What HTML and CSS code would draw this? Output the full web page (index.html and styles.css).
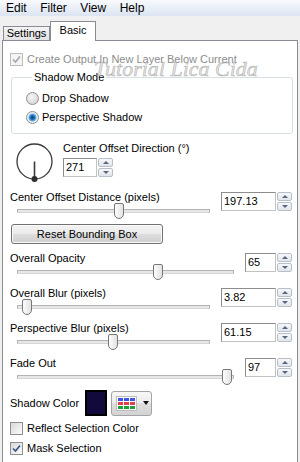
FILE: index.html
```html
<!DOCTYPE html>
<html lang="en">
<head>
  <meta charset="UTF-8">
  <title>Perspective Shadow</title>
  <link rel="stylesheet" href="styles.css">
</head>
<body>
<div class="window">

  <!-- menu -->
  <div class="menubar">
    <span>Edit</span><span>Filter</span><span>View</span><span>Help</span>
  </div>

  <!-- tabs -->
  <div class="tabs">
    <span class="tab">Settings</span>
    <span class="tab active">Basic</span>
  </div>

  <div class="panel">
    <div class="watermark">Tutorial Lica Cida</div>

    <label class="check disabled">
      <span class="box"><svg width="11" height="11" viewBox="0 0 11 11"><polyline points="2,5.5 4.5,8 9,2.5" /></svg></span>
      Create Output In New Layer Below Current
    </label>

    <fieldset class="group">
      <legend>Shadow Mode</legend>
      <label class="radio"><span class="dot"></span>Drop Shadow</label>
      <label class="radio"><span class="dot on"></span>Perspective Shadow</label>
    </fieldset>

    <!-- direction dial -->
    <div class="dir">
      <svg class="dial" width="40" height="41" viewBox="0 0 40 41">
        <circle cx="19.5" cy="19.5" r="17.5" fill="#fff" stroke="#3a3a3a" stroke-width="1.3" />
        <line x1="19.5" y1="19.5" x2="19.5" y2="37" stroke="#3a3a3a" stroke-width="1.6" />
        <circle cx="19.5" cy="37" r="3" fill="#2e2e2e" />
      </svg>
      <div class="dir-body">
        <div class="lbl">Center Offset Direction (°)</div>
        <div class="spin dirw"><span class="field">271</span><span class="arrows"><span class="up"></span><span class="down"></span></span></div>
      </div>
    </div>

    <div class="param">
      <div class="lbl">Center Offset Distance (pixels)</div>
      <div class="slider"><span class="thumb" style="left: 52.8%"></span></div>
      <div class="spin wide"><span class="field">197.13</span><span class="arrows"><span class="up"></span><span class="down"></span></span></div>
    </div>

    <button class="btn">Reset Bounding Box</button>

    <div class="param">
      <div class="lbl">Overall Opacity</div>
      <div class="slider"><span class="thumb" style="left: 65%"></span></div>
      <div class="spin narrow"><span class="field">65</span><span class="arrows"><span class="up"></span><span class="down"></span></span></div>
    </div>

    <div class="param">
      <div class="lbl">Overall Blur (pixels)</div>
      <div class="slider"><span class="thumb" style="left: 5.2%"></span></div>
      <div class="spin wide"><span class="field">3.82</span><span class="arrows"><span class="up"></span><span class="down"></span></span></div>
    </div>

    <div class="param">
      <div class="lbl">Perspective Blur (pixels)</div>
      <div class="slider"><span class="thumb" style="left: 49.7%"></span></div>
      <div class="spin wide"><span class="field">61.15</span><span class="arrows"><span class="up"></span><span class="down"></span></span></div>
    </div>

    <div class="param">
      <div class="lbl">Fade Out</div>
      <div class="slider"><span class="thumb" style="left: 97%"></span></div>
      <div class="spin narrow"><span class="field">97</span><span class="arrows"><span class="up"></span><span class="down"></span></span></div>
    </div>

    <div class="color-row">
      <span class="color-lbl">Shadow Color</span>
      <span class="swatch"></span>
      <span class="picker">
        <span class="palette">
          <i class="b"></i><i class="b"></i><i class="b"></i>
          <i class="r"></i><i class="r"></i><i class="r"></i>
          <i class="g"></i><i class="g"></i><i class="g"></i>
        </span>
        <span class="caret"></span>
      </span>
    </div>

    <label class="check reflect">
      <span class="box"></span>
      Reflect Selection Color
    </label>
    <label class="check mask">
      <span class="box"><svg width="11" height="11" viewBox="0 0 11 11"><polyline points="2,5.5 4.5,8 9,2.5" /></svg></span>
      Mask Selection
    </label>
  </div>

</div>
</body>
</html>
```

FILE: styles.css
```css
body {
  margin: 0;
  font-family: "Liberation Sans", Arial, sans-serif;
  font-size: 11px;
  color: #000;
  background: #f0f0f0;
}
.window {
  width: 300px;
  height: 462px;
  overflow: hidden;
}
.menubar {
  height: 16px;
  line-height: 17px;
  font-size: 12px;
  padding-left: 6px;
  display: flex;
  gap: 13.5px;
  background: linear-gradient(#f8fafd, #dbe4f1);
}
.tabs {
  height: 24px;
  display: flex;
  align-items: flex-end;
  padding-left: 3px;
}
.tab {
  width: 45px;
  height: 13px;
  line-height: 13px;
  text-align: center;
  border: 1px solid #898c95;
  border-bottom: 0;
  background: linear-gradient(#f4f4f4, #e4e4e4);
}
.tab.active {
  width: 44px;
  height: 16px;
  line-height: 16px;
  padding-bottom: 3px;
  margin-bottom: -1px;
  background: #fff;
  position: relative;
  z-index: 1;
}
.panel {
  position: relative;
  height: 421px;
  margin: 0 2px;
  padding-top: 11px;
  background: #fff;
  border: 1px solid #898c95;
  border-bottom: 0;
}
.watermark {
  position: absolute;
  left: 91px;
  top: 17px;
  font-family: "Liberation Serif", serif;
  font-style: italic;
  font-size: 22px;
  line-height: 22px;
  color: rgba(205, 205, 205, 0.55);
  -webkit-text-stroke: 0.6px rgba(130, 130, 130, 0.55);
  pointer-events: none;
}

/* checkbox & radio */
.check {
  display: flex;
  align-items: center;
  gap: 4px;
  height: 14px;
  line-height: 14px;
  margin-left: 7px;
}
.check .box {
  width: 11px;
  height: 11px;
  border: 1px solid #8e8f8f;
  background: linear-gradient(135deg, #d9d9d9, #fbfbfb);
  display: flex;
  align-items: center;
  justify-content: center;
}
.check svg polyline {
  fill: none;
  stroke: #3d5685;
  stroke-width: 1.7;
}
.check.disabled {
  color: #8d8d8d;
}
.check.disabled .box {
  border-color: #bcbcbc;
  background: #f4f4f4;
}
.check.disabled svg polyline {
  stroke: #a7a7a7;
}
.check.reflect {
  margin-top: 5px;
}
.check.mask {
  margin-top: 6px;
}
.group {
  margin: 4px 4px 0 8px;
  padding: 7px 0 9px 14px;
  border: 1px solid #d5dfe5;
  border-radius: 3px;
}
.group legend {
  margin-left: 6px;
  padding: 0 2px;
  line-height: 14px;
}
.radio {
  display: flex;
  align-items: center;
  gap: 3px;
  height: 14px;
  line-height: 14px;
}
.radio + .radio {
  margin-top: 5px;
}
.dot {
  width: 11px;
  height: 11px;
  border: 1px solid #8e8f8f;
  border-radius: 50%;
  background: radial-gradient(circle at 40% 35%, #f6f6f6, #cfcfcf);
  box-sizing: content-box;
}
.dot.on {
  background: radial-gradient(circle, #0d3a66 0, #1f6fb0 2px, #5eaee8 3.5px, #eef2f6 4.5px, #d8dce0 100%);
}

/* direction */
.dir {
  display: flex;
  margin-top: 8px;
}
.dial {
  margin-left: 12px;
}
.dir-body {
  margin: -1px 0 0 8px;
}
.dir-body .lbl {
  line-height: 14px;
}
.dir-body .spin {
  margin-top: 3px;
}

/* slider rows */
.param {
  display: grid;
  grid-template-columns: 1fr auto;
  column-gap: 11px;
  margin: 7px 5px 0 7px;
}
.param .lbl {
  grid-column: 1;
  height: 14px;
  line-height: 14px;
}
.slider {
  grid-column: 1;
  position: relative;
  height: 14px;
  margin-left: 7px;
}
.slider::before {
  content: "";
  position: absolute;
  left: 0;
  right: 0;
  top: 5px;
  height: 2px;
  border: 1px solid #b3b3b3;
  border-bottom-color: #d6d6d6;
  background: #e7e7e7;
}
.thumb {
  position: absolute;
  top: -1px;
  width: 8px;
  height: 14px;
  margin-left: -5px;
  border: 1px solid #777;
  border-radius: 2px 2px 5px 5px;
  background: linear-gradient(90deg, #fdfdfd, #e2e2e2);
}
.param .spin {
  grid-column: 2;
  grid-row: 1 / span 2;
  align-self: start;
  margin-top: 2px;
}

/* spin box */
.spin {
  display: flex;
  gap: 1px;
  height: 19px;
}
.field {
  box-sizing: border-box;
  height: 19px;
  line-height: 17px;
  padding-left: 2px;
  border: 1px solid #8d8d8d;
  border-right-color: #c2c2c2;
  border-bottom-color: #c2c2c2;
  background: #fff;
}
.wide .field { width: 55px; }
.narrow .field { width: 31px; }
.dirw .field { width: 34px; }
.arrows {
  width: 15px;
  display: flex;
  flex-direction: column;
  gap: 1px;
}
.arrows span {
  flex: 1;
  position: relative;
  border: 1px solid #b8bfc8;
  border-radius: 2px;
  background: linear-gradient(#f6f7f9, #e1e5ea);
}
.arrows span::after {
  content: "";
  position: absolute;
  left: 4px;
  top: 2px;
  border-left: 3px solid transparent;
  border-right: 3px solid transparent;
}
.arrows .up::after {
  border-bottom: 3px solid #56677e;
}
.arrows .down::after {
  border-top: 3px solid #56677e;
}

/* button */
.btn {
  display: block;
  box-sizing: border-box;
  width: 152px;
  height: 20px;
  margin: 6px 0 0 8px;
  padding: 0;
  font: inherit;
  color: #000;
  border: 1px solid #707070;
  border-radius: 3px;
  background: linear-gradient(#f2f2f2 0, #ebebeb 50%, #dddddd 50%, #cfcfcf 100%);
  box-shadow: inset 0 0 0 1px #fbfbfb;
}
.btn + .param {
  margin-top: 7px;
}

/* colour */
.color-row {
  display: flex;
  align-items: center;
  height: 26px;
  margin: 6px 0 0 7px;
}
.color-lbl {
  width: 75px;
}
.swatch {
  box-sizing: border-box;
  width: 22px;
  height: 26px;
  border: 2px solid #000;
  background: #120a3a;
}
.picker {
  box-sizing: border-box;
  width: 41px;
  height: 25px;
  margin-left: 4px;
  display: flex;
  align-items: center;
  padding-left: 4px;
  border: 1px solid #a3a3a3;
  border-radius: 3px;
  background: linear-gradient(#f7f7f7 0, #ececec 50%, #dedede 50%, #d3d3d3 100%);
}
.palette {
  display: grid;
  grid-template-columns: repeat(3, 5px);
  grid-auto-rows: 3px;
  gap: 1px;
  padding: 1px;
  background: #fff;
  border: 1px solid #bdbdbd;
}
.palette i { display: block; }
.palette .b { background: #3f57e0; }
.palette .r { background: #e33f4c; }
.palette .g { background: #1fa23a; }
.caret {
  margin-left: 6px;
  border-left: 3.5px solid transparent;
  border-right: 3.5px solid transparent;
  border-top: 4px solid #111;
}
```
